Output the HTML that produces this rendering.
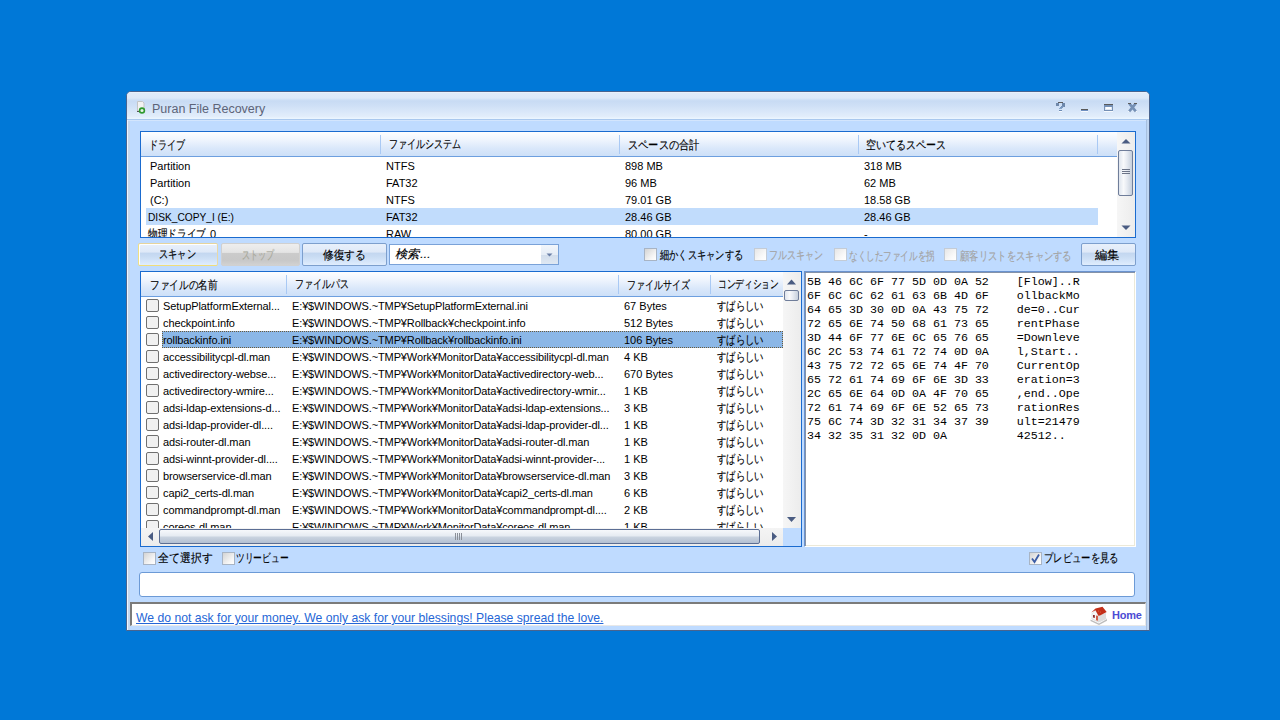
<!DOCTYPE html>
<html><head><meta charset="utf-8">
<style>
*{margin:0;padding:0;box-sizing:border-box}
html,body{width:1280px;height:720px;overflow:hidden}
body{background:#0078d7;font-family:"Liberation Sans",sans-serif;font-size:11px;color:#000;position:relative}
.a{position:absolute}
.t{position:absolute;white-space:nowrap;line-height:1}
.j{position:absolute;white-space:nowrap;line-height:1;font-size:12px;transform-origin:0 0;-webkit-text-stroke:0.15px currentColor}
.cb{position:absolute;width:13px;height:13px;border:1px solid #707070;border-radius:2px;background:#f1f1f1}
.cb2{position:absolute;width:13px;height:13px;border:1px solid #a8b4c4;background:linear-gradient(135deg,#d4d4d4,#f6f6f6 70%,#fff)}
.cbd{position:absolute;width:13px;height:13px;border:1px solid #c4ccd6;background:linear-gradient(135deg,#e6e6e6,#fafafa 70%,#fff)}
.hdr{position:absolute;background:linear-gradient(#fefeff 0%,#eef4fd 35%,#d9e7fa 70%,#cde0f8 100%);border-bottom:1px solid #6d9fdf}
.sep{position:absolute;width:1px;background:#a9c9f4}
.btn{position:absolute;border:1px solid #7d9fcd;border-radius:2px;background:linear-gradient(#e8f0fb 0%,#dfe9f8 38%,#c3d7f0 44%,#c9dcf3 60%,#d6e6fa 85%,#e0edfd 100%)}
.vs{position:absolute;background:linear-gradient(90deg,#f6f6f6,#ececec)}
</style></head><body>

<div class="a" style="left:126px;top:91px;width:1024px;height:540px;background:#bfdbff;border:1px solid #48648f;border-radius:5px 5px 0 0"></div>
<div class="a" style="left:127px;top:92px;width:1022px;height:27px;border-radius:4px 4px 0 0;background:linear-gradient(#f3f7fd 0px,#e0ebf9 1px,#dde9f8 6px,#d0e1f6 7.5px,#c8dbf4 9px,#cfe0f6 14px,#dae8f9 20px,#e3eefb 25px,#eaf5ff 26px,#eaf5ff 27px)"></div>
<div class="a" style="left:127px;top:119px;width:1022px;height:1px;background:#a9c8ee"></div>
<div class="a" style="left:127px;top:120px;width:1022px;height:1px;background:#d3e5fd"></div>
<div class="a" style="left:127px;top:120px;width:1px;height:510px;background:#eef5ff"></div>
<div class="a" style="left:128px;top:121px;width:2px;height:509px;background:#c4d7ef"></div>
<div class="a" style="left:1146px;top:120px;width:1px;height:510px;background:#a8c0df"></div>
<div class="a" style="left:1147px;top:120px;width:2px;height:510px;background:#bfd6f3"></div>
<svg class="a" style="left:135px;top:99px" width="14" height="16" viewBox="0 0 14 16">
<path d="M2.5 2.5h5l1.5 1.5v8h-6.5z" fill="#f2f2f2" stroke="#c4c4c4" stroke-width="1"/>
<path d="M2 12.5h3" stroke="#555" stroke-width="1"/>
<circle cx="7" cy="11.5" r="2.4" fill="#e8f3e8" stroke="#2f9a2f" stroke-width="1.6"/>
</svg>
<div class="t" style="left:152px;top:103px;font-size:12.5px;color:#5d6478">Puran File Recovery</div>
<svg class="a" style="left:1050px;top:98px" width="95" height="18" viewBox="0 0 95 18" shape-rendering="crispEdges">
<g fill="#fff" opacity=".8"><rect x="9" y="13" width="3" height="1"/><rect x="31" y="13" width="7" height="1"/><rect x="54" y="13" width="9" height="1"/><rect x="78" y="13" width="3" height="1"/><rect x="84" y="13" width="3" height="1"/></g>
<rect x="8" y="4" width="5" height="1" fill="#5c5c5c"/>
<rect x="6" y="5" width="3" height="3" fill="#7089ab"/>
<rect x="12" y="5" width="3" height="4" fill="#6d87aa"/>
<rect x="11" y="8" width="3" height="1" fill="#7592b8"/>
<rect x="10" y="9" width="3" height="1" fill="#7a98bf"/>
<rect x="9" y="10" width="3" height="1" fill="#86a4c8"/>
<rect x="9" y="12" width="3" height="1" fill="#6e8cb4"/>
<rect x="31" y="11" width="7" height="1" fill="#595959"/>
<rect x="31" y="12" width="7" height="1" fill="#6f8fc0"/>
<rect x="54" y="6" width="9" height="1" fill="#595959"/>
<rect x="54" y="7" width="9" height="6" fill="#7590b5"/>
<rect x="55" y="9" width="7" height="3" fill="#dfe8f4"/><rect x="56" y="9" width="5" height="2" fill="#fdfeff"/>
</svg>
<svg class="a" style="left:1126px;top:101px" width="14" height="13" viewBox="0 0 14 13">
<path d="M3.4 2.6L9.8 10.4M9.6 2.6L3.2 10.4" stroke="#7590b5" stroke-width="2.6"/>
<g shape-rendering="crispEdges" fill="#5a5a5a"><rect x="2" y="2" width="3" height="1"/><rect x="8" y="2" width="3" height="1"/></g>
</svg>
<div class="a" style="left:140px;top:131px;width:996px;height:107px;background:#fff;border:1px solid #1a6bcf"></div>
<div class="hdr" style="left:141px;top:132px;width:976px;height:25px"></div>
<div class="sep" style="left:380px;top:135px;height:19px"></div>
<div class="sep" style="left:619px;top:135px;height:19px"></div>
<div class="sep" style="left:858px;top:135px;height:19px"></div>
<div class="sep" style="left:1097px;top:135px;height:19px"></div>
<div class="j" data-w="36.33" style="left:148.67px;top:139.00px;">ドライブ</div>
<div class="j" data-w="72.51" style="left:389.04px;top:138.00px;">ファイルシステム</div>
<div class="j" data-w="71.55" style="left:628.15px;top:139.00px;">スペースの合計</div>
<div class="j" data-w="79.66" style="left:866.37px;top:139.00px;">空いてるスペース</div>
<div class="a" style="left:146px;top:208px;width:952px;height:17px;background:#c1dcfc"></div>
<div class="a" style="left:141px;top:157px;width:976px;height:80px;overflow:hidden">
<div class="t" style="left:9px;top:4px">Partition</div>
<div class="t" style="left:245px;top:4px">NTFS</div>
<div class="t" style="left:484px;top:4px">898 MB</div>
<div class="t" style="left:723px;top:4px">318 MB</div>
<div class="t" style="left:9px;top:21px">Partition</div>
<div class="t" style="left:245px;top:21px">FAT32</div>
<div class="t" style="left:484px;top:21px">96 MB</div>
<div class="t" style="left:723px;top:21px">62 MB</div>
<div class="t" style="left:9px;top:38px">(C:)</div>
<div class="t" style="left:245px;top:38px">NTFS</div>
<div class="t" style="left:484px;top:38px">79.01 GB</div>
<div class="t" style="left:723px;top:38px">18.58 GB</div>
<div data-w="86" class="j" style="font-size:11px;-webkit-text-stroke:0;left:7px;top:55px">DISK_COPY_I (E:)</div>
<div class="t" style="left:245px;top:55px">FAT32</div>
<div class="t" style="left:484px;top:55px">28.46 GB</div>
<div class="t" style="left:723px;top:55px">28.46 GB</div>
<div class="j" data-w="58.00" style="left:6.80px;top:71.30px;">物理ドライブ</div><div class="t" style="left:69px;top:72px">0</div>
<div class="t" style="left:245px;top:72px">RAW</div>
<div class="t" style="left:484px;top:72px">80.00 GB</div>
<div class="t" style="left:723px;top:72px">-</div>
</div>
<div class="vs" style="left:1117px;top:132px;width:18px;height:105px"></div>
<svg class="a" style="left:1117px;top:132px" width="18" height="105"><path d="M4.5 11.5h9l-4.5-4.5z" fill="#4a5c82"/><path d="M4.5 93.5h9l-4.5 4.5z" fill="#4a5c82"/></svg>
<div class="a" style="left:1118px;top:150px;width:15px;height:46px;border:1px solid #6f7d9a;border-radius:2px;background:linear-gradient(90deg,#dfe5ee,#f8f9fb 35%,#e7ebf2 60%,#c6cfdc)"></div>
<svg class="a" style="left:1121px;top:168px" width="10" height="8"><path d="M1 1.5h8M1 3.5h8M1 5.5h8" stroke="#6c7488" stroke-width="1"/></svg>
<div class="btn" style="left:138px;top:243px;width:80px;height:23px;border-color:#e6d49c #e8d8a6 #f0dd7a #eedf86;box-shadow:inset 1px 1px 0 #fff"></div>
<div class="j" data-w="36.83" style="left:158.93px;top:248.30px;">スキャン</div>
<div class="a" style="left:221px;top:243px;width:79px;height:23px;border:1px solid #d0d0d0;border-radius:2px;background:linear-gradient(#eeeeee 0%,#e4e4e4 40%,#cbcbcb 45%,#c8c8c8 80%,#d2d2d2 100%)"></div>
<div class="j" data-w="32.30" style="left:242.33px;top:249.30px;color:#a8a89a">ストップ</div>
<div class="btn" style="left:302px;top:243px;width:85px;height:23px"></div>
<div class="j" data-w="42.89" style="left:323.00px;top:249.30px;">修復する</div>
<div class="a" style="left:389px;top:244px;width:170px;height:21px;background:#fff;border:1px solid #7aa2d8"></div>
<div class="a" style="left:541px;top:245px;width:17px;height:19px;background:linear-gradient(#f2f6fb,#e6edf6 50%,#d3deec 55%,#dfe8f3)"></div>
<svg class="a" style="left:546px;top:253px" width="9" height="5"><path d="M0.5 0.5h6l-3 3z" fill="#6a7ea6"/></svg>
<div class="j" data-t="skewX(-12deg)" data-w="35.05" style="left:396.90px;top:248.40px;">検索...</div>
<div class="cb2" style="left:644px;top:248px"></div>
<div class="j" data-w="83.17" style="left:659.80px;top:248.50px;">細かくスキャンする</div>
<div class="cbd" style="left:754px;top:248px"></div>
<div class="j" data-w="53.90" style="left:768.95px;top:248.50px;color:#a3a3a3">フルスキャン</div>
<div class="cbd" style="left:834px;top:248px"></div>
<div class="j" data-w="85.63" style="left:848.79px;top:249.50px;color:#a3a3a3">なくしたファイルを拐</div>
<div class="cbd" style="left:944px;top:248px"></div>
<div class="j" data-w="111.78" style="left:960.00px;top:249.50px;color:#a3a3a3">顧客リストをスキャンする</div>
<div class="btn" style="left:1081px;top:243px;width:55px;height:23px"></div>
<div class="j" data-w="24.50" style="left:1095.00px;top:249.30px;">編集</div>
<div class="a" style="left:140px;top:271px;width:662px;height:276px;background:#fff;border:1px solid #1a6bcf"></div>
<div class="hdr" style="left:141px;top:272px;width:642px;height:25px"></div>
<div class="sep" style="left:286px;top:275px;height:19px"></div>
<div class="sep" style="left:618px;top:275px;height:19px"></div>
<div class="sep" style="left:710px;top:275px;height:19px"></div>
<div class="j" data-w="67.50" style="left:150.00px;top:279.00px;">ファイルの名前</div>
<div class="j" data-w="53.79" style="left:295.05px;top:278.00px;">ファイルパス</div>
<div class="j" data-w="62.54" style="left:627.16px;top:279.00px;">ファイルサイズ</div>
<div class="j" data-w="60.77" style="left:718.05px;top:278.00px;">コンディション</div>
<div class="a" style="left:141px;top:297px;width:642px;height:231px;overflow:hidden">
<div class="a" style="left:21px;top:34px;width:621px;height:17px;background:#8bb7e7;border:1px dotted #6b5a3a"></div>
<div class="cb" style="left:5px;top:2px"></div>
<div class="t" style="left:22px;top:4px;letter-spacing:-0.1px">SetupPlatformExternal...</div>
<div class="t" style="left:151px;top:4px;letter-spacing:-0.13px">E:¥$WINDOWS.~TMP¥SetupPlatformExternal.ini</div>
<div class="t" style="left:483px;top:4px">67 Bytes</div>
<div class="j" data-w="46.50" style="left:575.90px;top:2.60px;">すばらしい</div>
<div class="cb" style="left:5px;top:19px"></div>
<div class="t" style="left:22px;top:21px;letter-spacing:-0.1px">checkpoint.info</div>
<div class="t" style="left:151px;top:21px;letter-spacing:-0.13px">E:¥$WINDOWS.~TMP¥Rollback¥checkpoint.info</div>
<div class="t" style="left:483px;top:21px">512 Bytes</div>
<div class="j" data-w="46.50" style="left:575.90px;top:19.60px;">すばらしい</div>
<div class="cb" style="left:5px;top:36px"></div>
<div class="t" style="left:22px;top:38px;letter-spacing:-0.1px">rollbackinfo.ini</div>
<div class="t" style="left:151px;top:38px;letter-spacing:-0.13px">E:¥$WINDOWS.~TMP¥Rollback¥rollbackinfo.ini</div>
<div class="t" style="left:483px;top:38px">106 Bytes</div>
<div class="j" data-w="46.50" style="left:575.90px;top:36.60px;">すばらしい</div>
<div class="cb" style="left:5px;top:53px"></div>
<div class="t" style="left:22px;top:55px;letter-spacing:-0.1px">accessibilitycpl-dl.man</div>
<div class="t" style="left:151px;top:55px;letter-spacing:-0.13px">E:¥$WINDOWS.~TMP¥Work¥MonitorData¥accessibilitycpl-dl.man</div>
<div class="t" style="left:483px;top:55px">4 KB</div>
<div class="j" data-w="46.50" style="left:575.90px;top:53.60px;">すばらしい</div>
<div class="cb" style="left:5px;top:70px"></div>
<div class="t" style="left:22px;top:72px;letter-spacing:-0.1px">activedirectory-webse...</div>
<div class="t" style="left:151px;top:72px;letter-spacing:-0.13px">E:¥$WINDOWS.~TMP¥Work¥MonitorData¥activedirectory-web...</div>
<div class="t" style="left:483px;top:72px">670 Bytes</div>
<div class="j" data-w="46.50" style="left:575.90px;top:70.60px;">すばらしい</div>
<div class="cb" style="left:5px;top:87px"></div>
<div class="t" style="left:22px;top:89px;letter-spacing:-0.1px">activedirectory-wmire...</div>
<div class="t" style="left:151px;top:89px;letter-spacing:-0.13px">E:¥$WINDOWS.~TMP¥Work¥MonitorData¥activedirectory-wmir...</div>
<div class="t" style="left:483px;top:89px">1 KB</div>
<div class="j" data-w="46.50" style="left:575.90px;top:87.60px;">すばらしい</div>
<div class="cb" style="left:5px;top:104px"></div>
<div class="t" style="left:22px;top:106px;letter-spacing:-0.1px">adsi-ldap-extensions-d...</div>
<div class="t" style="left:151px;top:106px;letter-spacing:-0.13px">E:¥$WINDOWS.~TMP¥Work¥MonitorData¥adsi-ldap-extensions...</div>
<div class="t" style="left:483px;top:106px">3 KB</div>
<div class="j" data-w="46.50" style="left:575.90px;top:104.60px;">すばらしい</div>
<div class="cb" style="left:5px;top:121px"></div>
<div class="t" style="left:22px;top:123px;letter-spacing:-0.1px">adsi-ldap-provider-dl....</div>
<div class="t" style="left:151px;top:123px;letter-spacing:-0.13px">E:¥$WINDOWS.~TMP¥Work¥MonitorData¥adsi-ldap-provider-dl...</div>
<div class="t" style="left:483px;top:123px">1 KB</div>
<div class="j" data-w="46.50" style="left:575.90px;top:121.60px;">すばらしい</div>
<div class="cb" style="left:5px;top:138px"></div>
<div class="t" style="left:22px;top:140px;letter-spacing:-0.1px">adsi-router-dl.man</div>
<div class="t" style="left:151px;top:140px;letter-spacing:-0.13px">E:¥$WINDOWS.~TMP¥Work¥MonitorData¥adsi-router-dl.man</div>
<div class="t" style="left:483px;top:140px">1 KB</div>
<div class="j" data-w="46.50" style="left:575.90px;top:138.60px;">すばらしい</div>
<div class="cb" style="left:5px;top:155px"></div>
<div class="t" style="left:22px;top:157px;letter-spacing:-0.1px">adsi-winnt-provider-dl....</div>
<div class="t" style="left:151px;top:157px;letter-spacing:-0.13px">E:¥$WINDOWS.~TMP¥Work¥MonitorData¥adsi-winnt-provider-...</div>
<div class="t" style="left:483px;top:157px">1 KB</div>
<div class="j" data-w="46.50" style="left:575.90px;top:155.60px;">すばらしい</div>
<div class="cb" style="left:5px;top:172px"></div>
<div class="t" style="left:22px;top:174px;letter-spacing:-0.1px">browserservice-dl.man</div>
<div class="t" style="left:151px;top:174px;letter-spacing:-0.13px">E:¥$WINDOWS.~TMP¥Work¥MonitorData¥browserservice-dl.man</div>
<div class="t" style="left:483px;top:174px">3 KB</div>
<div class="j" data-w="46.50" style="left:575.90px;top:172.60px;">すばらしい</div>
<div class="cb" style="left:5px;top:189px"></div>
<div class="t" style="left:22px;top:191px;letter-spacing:-0.1px">capi2_certs-dl.man</div>
<div class="t" style="left:151px;top:191px;letter-spacing:-0.13px">E:¥$WINDOWS.~TMP¥Work¥MonitorData¥capi2_certs-dl.man</div>
<div class="t" style="left:483px;top:191px">6 KB</div>
<div class="j" data-w="46.50" style="left:575.90px;top:189.60px;">すばらしい</div>
<div class="cb" style="left:5px;top:206px"></div>
<div class="t" style="left:22px;top:208px;letter-spacing:-0.1px">commandprompt-dl.man</div>
<div class="t" style="left:151px;top:208px;letter-spacing:-0.13px">E:¥$WINDOWS.~TMP¥Work¥MonitorData¥commandprompt-dl....</div>
<div class="t" style="left:483px;top:208px">2 KB</div>
<div class="j" data-w="46.50" style="left:575.90px;top:206.60px;">すばらしい</div>
<div class="cb" style="left:5px;top:223px"></div>
<div class="t" style="left:22px;top:225px;letter-spacing:-0.1px">coreos-dl.man</div>
<div class="t" style="left:151px;top:225px;letter-spacing:-0.13px">E:¥$WINDOWS.~TMP¥Work¥MonitorData¥coreos-dl.man</div>
<div class="t" style="left:483px;top:225px">1 KB</div>
<div class="j" data-w="46.50" style="left:575.90px;top:223.60px;">すばらしい</div>
</div>
<div class="vs" style="left:783px;top:272px;width:18px;height:256px"></div>
<svg class="a" style="left:783px;top:272px" width="18" height="256"><path d="M4 12.5h9l-4.5-5z" fill="#4a5c82"/><path d="M4 245h9l-4.5 5z" fill="#4a5c82"/></svg>
<div class="a" style="left:784px;top:290px;width:15px;height:11px;border:1px solid #6f7d9a;border-radius:2px;background:linear-gradient(90deg,#dfe5ee,#f8f9fb 35%,#e7ebf2 60%,#c6cfdc)"></div>
<div class="a" style="left:141px;top:528px;width:642px;height:18px;background:linear-gradient(#f4f4f4,#ececec)"></div>
<div class="a" style="left:783px;top:528px;width:18px;height:18px;background:#bfdbff"></div>
<svg class="a" style="left:141px;top:528px" width="642" height="18"><path d="M12 4v9l-5-4.5z" fill="#4a5c82"/><path d="M631 4v9l5-4.5z" fill="#4a5c82"/></svg>
<div class="a" style="left:159px;top:529px;width:601px;height:15px;border:1px solid #5b6e94;border-radius:2px;background:linear-gradient(#f6f8fb 0%,#e6ebf2 45%,#c9d3e0 55%,#b4c0d2 100%)"></div>
<svg class="a" style="left:454px;top:532px" width="10" height="9"><path d="M1.5 1v7M3.5 1v7M5.5 1v7M7.5 1v7" stroke="#8a8f98" stroke-width="1"/></svg>
<div class="a" style="left:804px;top:271px;width:332px;height:276px;background:#fff;border-left:1px solid #6a93d0;border-top:1px solid #6a93d0;box-shadow:inset 1px 1px 0 #8492a8,inset -1px -1px 0 #ece9d8;border-right:1px solid #fff;border-bottom:1px solid #fff"></div>
<div class="t" style="left:807px;top:277px;font-family:'Liberation Mono',monospace;font-size:11.67px;white-space:pre">5B 46 6C 6F 77 5D 0D 0A 52    [Flow]..R</div>
<div class="t" style="left:807px;top:291px;font-family:'Liberation Mono',monospace;font-size:11.67px;white-space:pre">6F 6C 6C 62 61 63 6B 4D 6F    ollbackMo</div>
<div class="t" style="left:807px;top:305px;font-family:'Liberation Mono',monospace;font-size:11.67px;white-space:pre">64 65 3D 30 0D 0A 43 75 72    de=0..Cur</div>
<div class="t" style="left:807px;top:319px;font-family:'Liberation Mono',monospace;font-size:11.67px;white-space:pre">72 65 6E 74 50 68 61 73 65    rentPhase</div>
<div class="t" style="left:807px;top:333px;font-family:'Liberation Mono',monospace;font-size:11.67px;white-space:pre">3D 44 6F 77 6E 6C 65 76 65    =Downleve</div>
<div class="t" style="left:807px;top:347px;font-family:'Liberation Mono',monospace;font-size:11.67px;white-space:pre">6C 2C 53 74 61 72 74 0D 0A    l,Start..</div>
<div class="t" style="left:807px;top:361px;font-family:'Liberation Mono',monospace;font-size:11.67px;white-space:pre">43 75 72 72 65 6E 74 4F 70    CurrentOp</div>
<div class="t" style="left:807px;top:375px;font-family:'Liberation Mono',monospace;font-size:11.67px;white-space:pre">65 72 61 74 69 6F 6E 3D 33    eration=3</div>
<div class="t" style="left:807px;top:389px;font-family:'Liberation Mono',monospace;font-size:11.67px;white-space:pre">2C 65 6E 64 0D 0A 4F 70 65    ,end..Ope</div>
<div class="t" style="left:807px;top:403px;font-family:'Liberation Mono',monospace;font-size:11.67px;white-space:pre">72 61 74 69 6F 6E 52 65 73    rationRes</div>
<div class="t" style="left:807px;top:417px;font-family:'Liberation Mono',monospace;font-size:11.67px;white-space:pre">75 6C 74 3D 32 31 34 37 39    ult=21479</div>
<div class="t" style="left:807px;top:431px;font-family:'Liberation Mono',monospace;font-size:11.67px;white-space:pre">34 32 35 31 32 0D 0A          42512..</div>
<div class="cb2" style="left:143px;top:552px"></div>
<div class="j" data-w="54.61" style="left:158.00px;top:551.70px;">全て選択す</div>
<div class="cb2" style="left:222px;top:552px"></div>
<div class="j" data-w="52.46" style="left:235.97px;top:551.70px;">ツリービュー</div>
<div class="cb2" style="left:1029px;top:552px"></div>
<svg class="a" style="left:1030px;top:553px" width="11" height="11"><path d="M2 5.5l2.5 3.5 4.5-7.5" fill="none" stroke="#3c5da6" stroke-width="1.8"/></svg>
<div class="j" data-w="74.66" style="left:1044.12px;top:551.70px;">プレビューを見る</div>
<div class="a" style="left:139px;top:572px;width:996px;height:25px;background:#fff;border:1px solid #6c9ad6;border-radius:3px"></div>
<div class="a" style="left:130px;top:602px;width:1016px;height:24px;background:#fff;border-top:2px solid #7b7b7b;border-left:2px solid #7b7b7b;border-bottom:1px solid #e8e8e8;border-right:1px solid #e8e8e8"></div>
<div class="t" style="left:136px;top:612px;font-size:12.2px;color:#2566d6;text-decoration:underline">We do not ask for your money. We only ask for your blessings! Please spread the love.</div>
<svg class="a" style="left:1086px;top:604px" width="24" height="24" viewBox="0 0 24 24">
<path d="M4.5 15.5L13 19.5l8-4.5v1.8L13 21l-8.5-4z" fill="#bdbdbd"/>
<path d="M5 14.5L13 18.5l8-4L13 11z" fill="#e6e6e6"/>
<path d="M6 9.5l3.5-3 3 4.5v7L6 15z" fill="#f6f6f6" stroke="#c9c9c9" stroke-width=".5"/>
<path d="M12.5 11l7.5-2v6l-7.5 3.5z" fill="#dedede"/>
<path d="M7 11h1.8v3l-1.8-.6z" fill="#8c2a2a"/>
<path d="M10.2 11.5l1.6.3v5l-1.6-.6z" fill="#c8381c"/>
<path d="M5.2 8.5L9.5 4.6 16.5 2.8l4.2 5.2-6.7 3.4-1.6.3L9.5 6.3z" fill="#c4301a"/>
<circle cx="12.5" cy="7" r=".5" fill="#e07050"/><circle cx="14.5" cy="8" r=".5" fill="#e07050"/>
</svg>
<div class="t" style="left:1112px;top:610px;font-size:11px;font-weight:bold;color:#4c4cd4;letter-spacing:-0.2px">Home</div>
<script>
document.querySelectorAll('.j').forEach(function(e){var w=parseFloat(e.dataset.w);var r=e.getBoundingClientRect().width;if(w&&r){e.style.transform='scaleX('+(w/r)+') '+(e.dataset.t||'');}});
</script>
</body></html>
